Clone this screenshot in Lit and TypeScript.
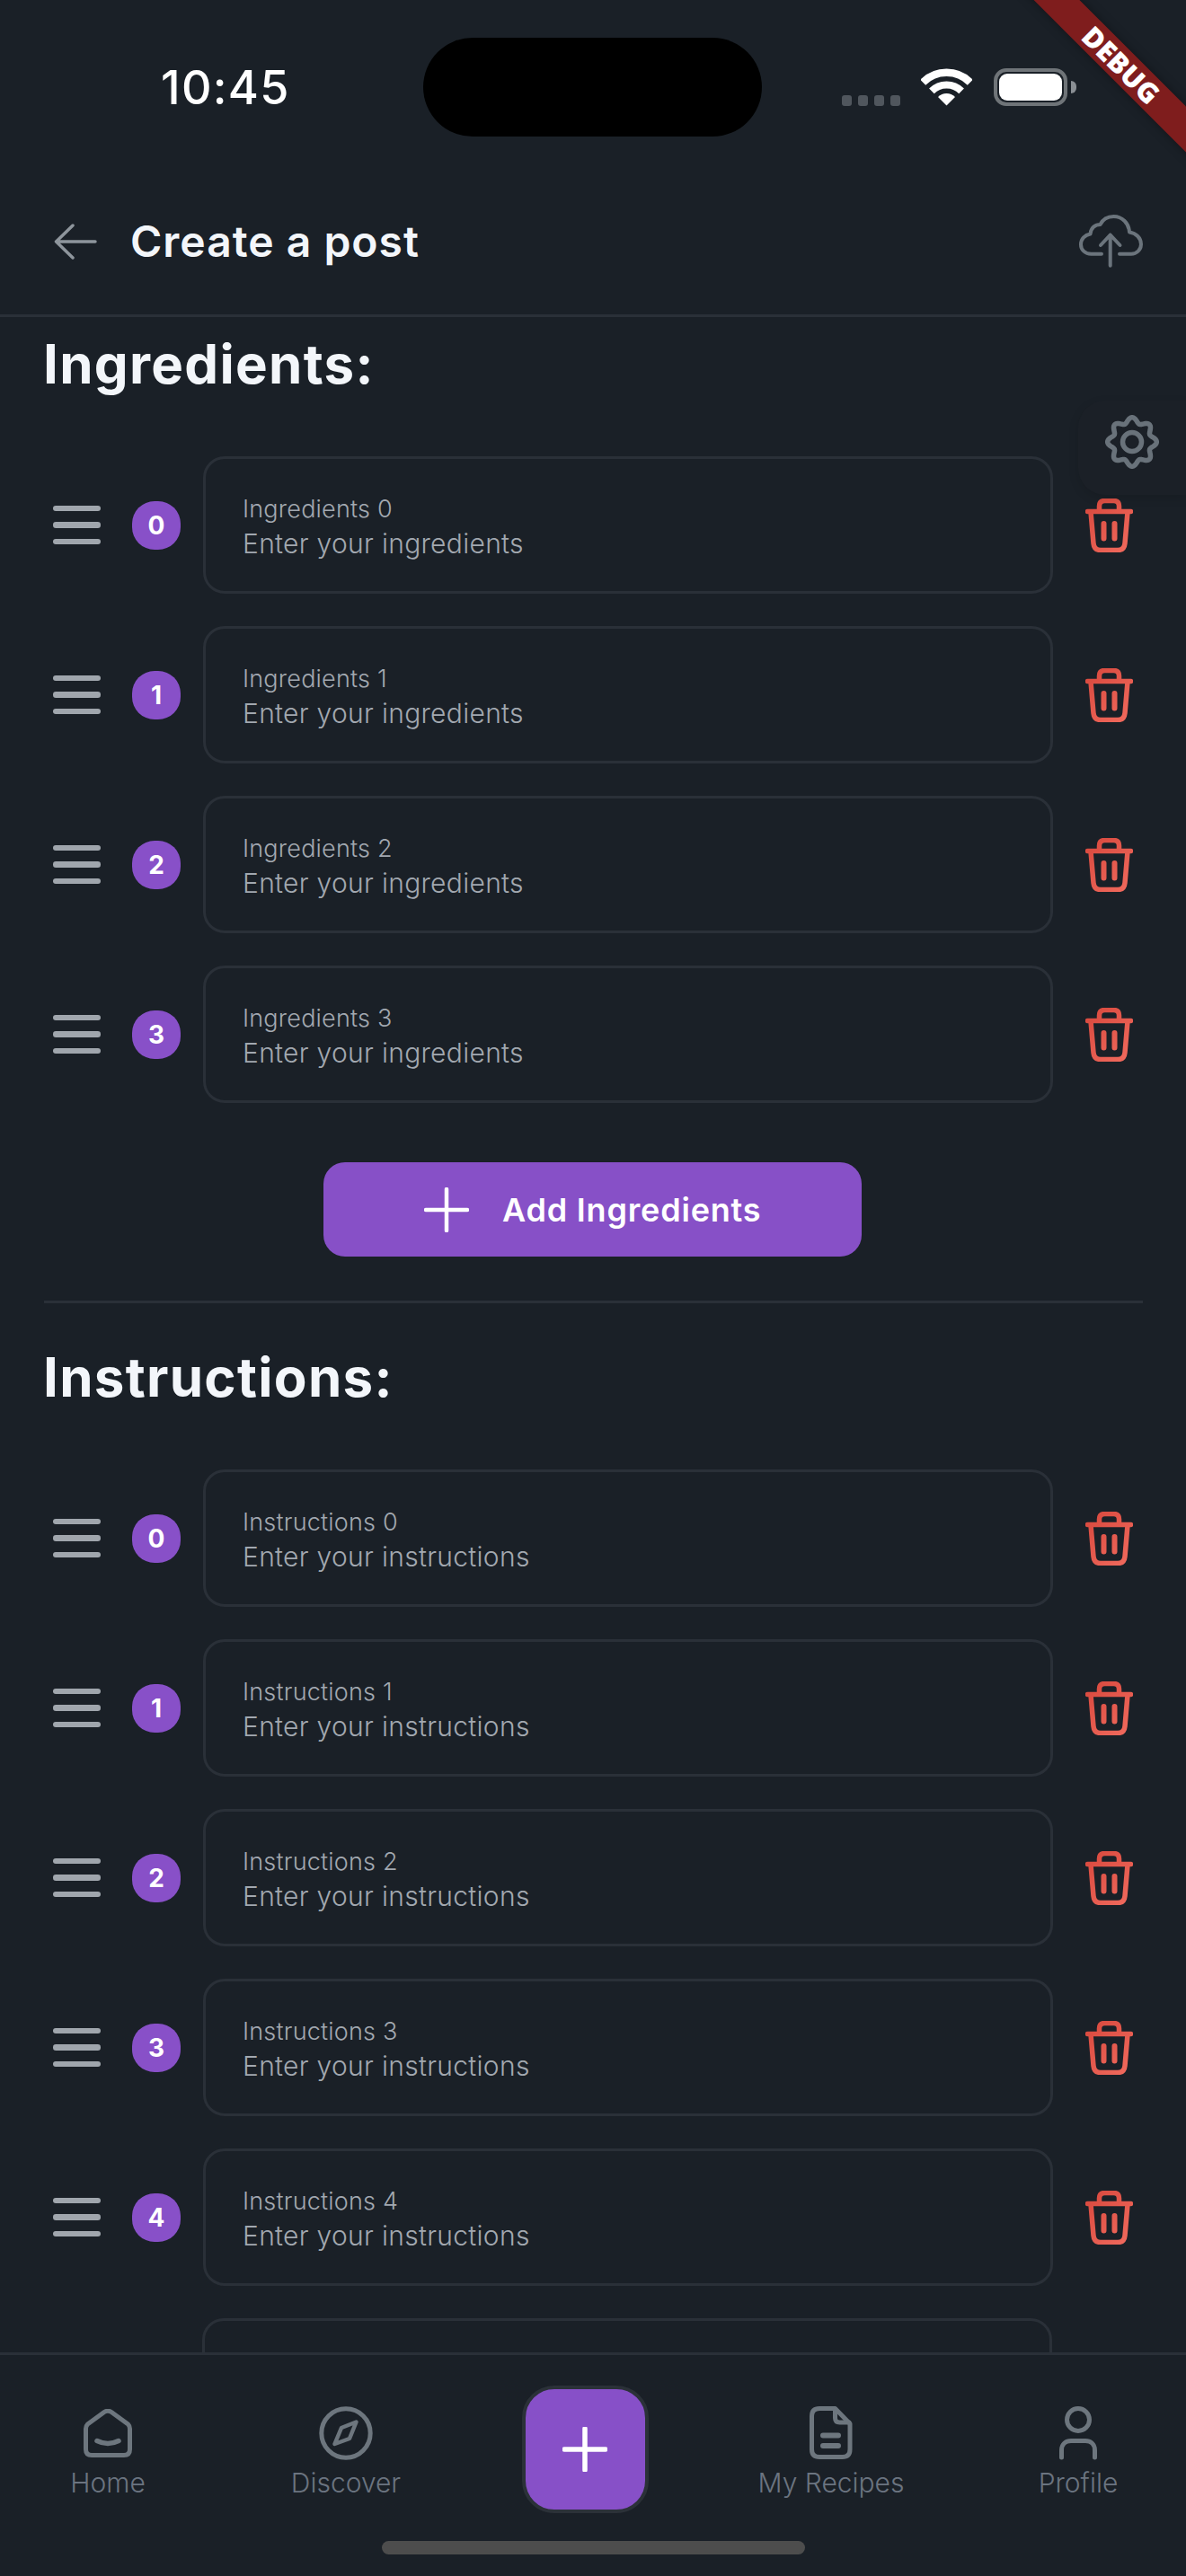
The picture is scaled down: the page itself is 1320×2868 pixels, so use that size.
import { LitElement, html, css, svg } from "lit";
import { customElement } from "lit/decorators.js";

function gearPath(): string {
  const pts: string[] = [];
  const n = 240;
  for (let i = 0; i < n; i++) {
    const t = (i / n) * Math.PI * 2;
    const r = 24.3 + 3 * Math.cos(8 * t);
    const x = 30 + r * Math.sin(t);
    const y = 30 - r * Math.cos(t);
    pts.push(`${x.toFixed(2)} ${y.toFixed(2)}`);
  }
  return "M" + pts.join("L") + "Z";
}

const trash = html`<svg class="trash" width="53" height="60" viewBox="0 0 53 60" fill="none" stroke="url(#tg)" stroke-width="5.5" stroke-linecap="round" stroke-linejoin="round">
  <defs><linearGradient id="tg" gradientUnits="userSpaceOnUse" x1="0" y1="10" x2="53" y2="60"><stop offset="0" stop-color="#d94a3f"/><stop offset="1" stop-color="#f26c5f"/></linearGradient></defs>
  <path d="M2.5 14.5H50.5"/>
  <path d="M15.5 14V8.5Q15.5 2.5 21.5 2.5H31.5Q37.5 2.5 37.5 8.5V14"/>
  <path d="M6 15L9 50Q9.7 57.5 17 57.5H36Q43.3 57.5 44 50L47 15"/>
  <path d="M20.5 28V44.5M32.5 28V44.5" stroke-width="6"/>
</svg>`;

const handle = html`<div class="handle"><i></i><i></i><i></i></div>`;

const navItems = [
  {
    label: "Home",
    icon: svg`<svg width="54" height="54" viewBox="0 0 54 54"><path d="M2.5 22V45Q2.5 51.5 9 51.5H45Q51.5 51.5 51.5 45V22Q51.5 19 49.5 17L31 3.5Q27 1 23 3.5L4.5 17Q2.5 19 2.5 22Z"/><path d="M15 35.5Q27 41.5 39 35.5" stroke-width="5.5"/></svg>`,
  },
  {
    label: "Discover",
    icon: svg`<svg width="60" height="60" viewBox="0 0 60 60"><circle cx="30" cy="30" r="27.2"/><path d="M41.5 17.5L34 36L17.5 42L25 24Z" stroke-width="4.5"/></svg>`,
  },
  null,
  {
    label: "My Recipes",
    icon: svg`<svg width="48" height="60" viewBox="0 0 48 60"><path d="M28.5 2.5H11Q2.5 2.5 2.5 11V48Q2.5 56.5 11 56.5H36.5Q45 56.5 45 48V19.5Z"/><path d="M28.5 4V13Q28.5 18 33.5 18H44"/><path d="M15 32.5H32M15 44H32" stroke-width="6"/></svg>`,
  },
  {
    label: "Profile",
    icon: svg`<svg width="42" height="60" viewBox="0 0 42 60"><circle cx="21" cy="15" r="12.5"/><path d="M2.5 57V49C2.5 42 7.5 38.5 13 38.5H29C34.5 38.5 39.5 42 39.5 49V57"/></svg>`,
  },
];

@customElement("app-root")
export class AppRoot extends LitElement {
  static styles = css`
    :host {
      display: flex;
      flex-direction: column;
      position: relative;
      width: 1320px;
      height: 2868px;
      overflow: hidden;
      background: #1a2027;
      font-family: "Inter", "Liberation Sans", sans-serif;
      color: #f3f6fa;
    }
    .status {
      flex: none;
      height: 188px;
      display: flex;
      align-items: flex-start;
    }
    .time {
      width: 292px;
      margin: 68px 0 0 179px;
      font-size: 52px;
      line-height: 60px;
      font-weight: 500;
      letter-spacing: 1.3px;
      color: #fff;
    }
    .notch {
      width: 377px;
      height: 110px;
      margin-top: 42px;
      border-radius: 55px;
      background: #000;
    }
    .sys {
      display: flex;
      align-items: flex-start;
      margin: 76px 0 0 89px;
    }
    .dots {
      display: flex;
      gap: 7px;
      margin: 30px 23px 0 0;
    }
    .dots i {
      width: 11px;
      height: 12px;
      border-radius: 3px;
      background: #50565d;
    }
    .wifi {
      display: block;
      margin-right: 24px;
    }
    .battery {
      box-sizing: border-box;
      width: 82px;
      height: 42px;
      border: 4px solid #6f7478;
      border-radius: 14px;
      padding: 2px;
    }
    .battery i {
      display: block;
      height: 100%;
      border-radius: 9px;
      background: #fff;
    }
    .nub {
      width: 6px;
      height: 14px;
      margin: 14px 0 0 4px;
      border-radius: 0 7px 7px 0;
      background: #8a8f94;
    }

    .appbar {
      flex: none;
      box-sizing: border-box;
      height: 165px;
      display: flex;
      align-items: center;
      padding: 0 48px 0 60px;
      border-bottom: 3px solid #2a3038;
    }
    .appbar h1 {
      margin: 0 0 0 37px;
      font-size: 48px;
      line-height: 58px;
      font-weight: 600;
      letter-spacing: 1px;
    }
    .cloud {
      margin-left: auto;
    }

    .scroll {
      flex: 1;
      min-height: 0;
      overflow: hidden;
      box-sizing: border-box;
      padding: 16px 48px 0;
    }
    h2 {
      margin: 0 0 67px;
      font-size: 60px;
      line-height: 72px;
      font-weight: 700;
      letter-spacing: 1.3px;
    }
    .rows {
      display: flex;
      flex-direction: column;
      gap: 36px;
    }
    .row {
      display: flex;
      align-items: center;
      margin-left: 11px;
    }
    .handle {
      width: 53px;
      display: flex;
      flex-direction: column;
      gap: 12px;
      margin-right: 35px;
    }
    .handle i {
      height: 6.5px;
      border-radius: 3.25px;
      background: #a0a6ad;
    }
    .badge {
      width: 54px;
      height: 54px;
      flex: none;
      border-radius: 25px;
      background: #8850c8;
      color: #fff;
      font-size: 28px;
      font-weight: 700;
      line-height: 54px;
      text-align: center;
      margin-right: 25px;
    }
    .card {
      box-sizing: border-box;
      width: 946px;
      height: 153px;
      flex: none;
      border: 3px solid #2a3038;
      border-radius: 24px;
      padding: 38px 0 0 41px;
      margin-right: 36px;
    }
    .peek {
      margin-left: 177px;
    }
    .label {
      font-size: 27px;
      line-height: 36px;
      font-weight: 300;
      letter-spacing: 0.2px;
      color: #a2a8b0;
    }
    .ph {
      font-size: 30px;
      line-height: 40px;
      font-weight: 300;
      letter-spacing: 0.3px;
      color: #a2a8b0;
    }
    .trash {
      flex: none;
      display: block;
    }
    .add {
      box-sizing: border-box;
      width: 599px;
      height: 105px;
      margin: 66px auto 0 312px;
      border-radius: 24px;
      background: #8750c7;
      display: flex;
      align-items: center;
      padding-left: 112px;
      gap: 37px;
      color: #fff;
      font-size: 36px;
      font-weight: 600;
      letter-spacing: 0.8px;
    }
    .sep {
      height: 3px;
      margin: 49px 0 46px 1px;
      background: #2a3038;
    }

    nav {
      flex: none;
      box-sizing: border-box;
      height: 249px;
      border-top: 3px solid #2a3038;
      padding-top: 34px;
    }
    .tabs {
      display: grid;
      grid-template-columns: 200px 330px 202px 346px 204px;
      height: 142px;
      padding-left: 20px;
      align-items: start;
    }
    .tab {
      display: flex;
      flex-direction: column;
      align-items: center;
      padding-top: 23px;
      color: #6b7480;
      font-size: 30px;
      line-height: 36px;
      font-weight: 300;
    }
    .tab .ic {
      height: 60px;
      margin-bottom: 7px;
      display: flex;
      align-items: center;
    }
    .tab svg {
      display: block;
      fill: none;
      stroke: #6d767e;
      stroke-width: 5;
      stroke-linecap: round;
      stroke-linejoin: round;
    }
    .fab {
      box-sizing: border-box;
      width: 141px;
      height: 142px;
      justify-self: center;
      border: 4px solid #2b3138;
      border-radius: 36px;
      background: #8750c8;
      display: flex;
      align-items: center;
      justify-content: center;
    }
    .indicator {
      width: 471px;
      height: 15px;
      margin: 31px 0 0 425px;
      border-radius: 7.5px;
      background: #4d4d4d;
    }

    .banner {
      position: absolute;
      left: 1047.5px;
      top: 54px;
      width: 400px;
      height: 36px;
      transform: rotate(45deg);
      background: #7f1d1d;
      box-shadow: 0 0 12px rgba(0, 0, 0, 0.35);
      color: #fff;
      font-family: "Open Sans", sans-serif;
      font-size: 31px;
      font-weight: 800;
      line-height: 36px;
      text-align: center;
    }
    .gearbox {
      position: absolute;
      left: 1200px;
      top: 446px;
      width: 120px;
      height: 105px;
      border-radius: 30px 0 0 30px;
      background: #1b2027;
      box-shadow: 0 4px 12px rgba(0, 0, 0, 0.12);
      padding: 16px 0 0 30px;
      box-sizing: border-box;
    }
    .gearbox svg {
      display: block;
    }
  `;

  private list(name: string, ph: string, n: number, peek = false) {
    return html`<div class="rows">
      ${Array.from({ length: n }, (_, i) => html`<div class="row">
        ${handle}
        <div class="badge">${i}</div>
        <div class="card">
          <div class="label">${name} ${i}</div>
          <div class="ph">${ph}</div>
        </div>
        ${trash}
      </div>`)}
      ${peek ? html`<div class="card peek"></div>` : ""}
    </div>`;
  }

  render() {
    return html`
      <div class="status">
        <div class="time">10:45</div>
        <div class="notch"></div>
        <div class="sys">
          <div class="dots"><i></i><i></i><i></i><i></i></div>
          <svg class="wifi" width="57" height="42" viewBox="0 0 57 42" fill="none" stroke="#fff">
            <path d="M2.2 15.7A37.2 37.2 0 0 1 54.8 15.7" stroke-width="8.5"/>
            <path d="M11.9 25.4A23.5 23.5 0 0 1 45.1 25.4" stroke-width="8"/>
            <path d="M28.5 41.5L19 32A13.5 13.5 0 0 1 38 32Z" fill="#fff" stroke="none"/>
          </svg>
          <div class="battery"><i></i></div>
          <div class="nub"></div>
        </div>
      </div>

      <header class="appbar">
        <svg width="48" height="40" viewBox="0 0 48 40" fill="none" stroke="#8e959c" stroke-width="3.5" stroke-linecap="round" stroke-linejoin="round">
          <path d="M46 20H2.5M21 2L2.5 20L21 38"/>
        </svg>
        <h1>Create a post</h1>
        <svg class="cloud" width="72" height="60" viewBox="0 0 72 60" fill="none" stroke="#6b747c" stroke-width="4" stroke-linecap="round" stroke-linejoin="round">
          <path d="M26 43.7H14.5C7.5 43.7 3 39 3 33.2C3 27 7.5 22.5 13.5 21.5C14 14.5 19 11 24.5 11C27.5 5 33 2 39.5 2C49 2 56.5 9.5 57 19.5C64.5 20.5 70 26 70 33C70 39 65 43.7 59 43.7H46"/>
          <path d="M35.7 56.8V22.5M25 34L35.7 22.5L46.5 34"/>
        </svg>
      </header>

      <main class="scroll">
        <h2>Ingredients:</h2>
        ${this.list("Ingredients", "Enter your ingredients", 4)}
        <div class="add">
          <svg width="50" height="50" viewBox="0 0 50 50" fill="none" stroke="#fff" stroke-width="4.5" stroke-linecap="round"><path d="M25 2V48M2 25H48"/></svg>
          <span>Add Ingredients</span>
        </div>
        <div class="sep"></div>
        <h2>Instructions:</h2>
        ${this.list("Instructions", "Enter your instructions", 5, true)}
      </main>

      <nav>
        <div class="tabs">
          ${navItems.map((it) =>
            it
              ? html`<div class="tab"><div class="ic">${it.icon}</div><span>${it.label}</span></div>`
              : html`<div class="fab"><svg width="50" height="50" viewBox="0 0 50 50" fill="none" stroke="#fff" stroke-width="5.5" stroke-linecap="round"><path d="M25 2V48M2 25H48"/></svg></div>`
          )}
        </div>
        <div class="indicator"></div>
      </nav>

      <div class="gearbox">
        <svg width="60" height="60" viewBox="0 0 60 60" fill="none" stroke="#69727a" stroke-width="5.5">
          <path d="${gearPath()}" stroke-linejoin="round"/>
          <circle cx="30" cy="30" r="10.5"/>
        </svg>
      </div>
      <div class="banner">DEBUG</div>
    `;
  }
}
